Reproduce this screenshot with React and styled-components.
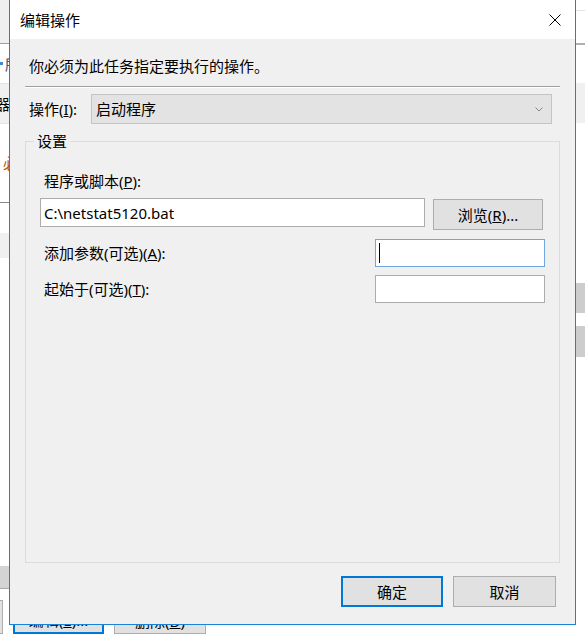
import React from 'react';
import styled, { createGlobalStyle } from 'styled-components';

const GlobalStyle = createGlobalStyle`
* {
    box-sizing: border-box;
    margin: 0;
    padding: 0;
}

body {
    width: 585px;
    height: 634px;
    overflow: hidden;
    background: #ffffff;
    font-family: "Noto Sans", "Noto Sans CJK SC", sans-serif;
    font-size: 15px;
    line-height: 20px;
    color: #000;
}
`;

const Desktop = styled.div`
	position: relative;
	width: 585px;
	height: 634px;
	overflow: hidden;
	background: #ffffff;
`;

/* ---------- the window behind the dialog ---------- */

const BackWindow = styled.div`
	display: flex;
	justify-content: space-between;
	width: 100%;
	height: 100%;
`;

const Pane = styled.div`
	display: flex;
	flex-direction: column;
	width: ${(p) => p.$w}px;
	height: 100%;
`;

const Band = styled.div`
	display: flex;
	align-items: center;
	flex: ${(p) => (p.$h ? `0 0 ${p.$h}px` : '1 1 auto')};
	background: ${(p) => p.$bg || '#ffffff'};
	border-bottom: ${(p) => (p.$line ? `${p.$lw || 1}px solid ${p.$line}` : 'none')};
	white-space: nowrap;
	overflow: hidden;
`;

const BandText = styled.span`
	margin-left: ${(p) => p.$indent || 0}px;
	color: ${(p) => p.$color || '#000'};
`;

const TaskIcon = styled.span`
	display: inline-block;
	width: 3px;
	height: 3px;
	background: #3a8ad8;
	margin-right: 2px;
`;

const ScrollBtn = styled.div`
	display: flex;
	align-items: center;
	flex: 0 0 ${(p) => p.$h}px;
	margin-top: ${(p) => p.$mt || 0}px;
	padding-left: 3px;
	background: #cdcdcd;
`;

const BackButtons = styled.div`
	display: flex;
	gap: 10px;
	padding-top: 11px;
	flex: 0 0 39px;
`;

const BackButton = styled.div`
	display: flex;
	justify-content: center;
	align-items: flex-end;
	width: ${(p) => p.$w}px;
	height: 34px;
	margin-left: ${(p) => p.$ml || 0}px;
	padding-bottom: 2px;
	background: #e1e1e1;
	border: ${(p) => (p.$primary ? '2px solid #0078d7' : '1px solid #adadad')};
`;

/* ---------- the dialog ---------- */

const Dialog = styled.div`
	position: absolute;
	left: 9px;
	top: -1px;
	width: 567px;
	height: 626px;
	display: flex;
	flex-direction: column;
	border: 1px solid #1883d7;
	background: #f0f0f0;
`;

const TitleBar = styled.div`
	display: flex;
	align-items: center;
	justify-content: space-between;
	flex: 0 0 39px;
	background: #ffffff;
	padding-left: 10px;
	padding-top: 1px;
`;

const Title = styled.span`
	font-size: 15px;
	color: #000;
`;

const CloseButton = styled.div`
	display: flex;
	align-items: center;
	justify-content: center;
	width: 40px;
	height: 38px;
`;

const Body = styled.div`
	flex: 1;
	display: flex;
	flex-direction: column;
	padding: 17px 15px 17px 15px;
`;

const Instruction = styled.p`
	padding-left: 4px;
`;

const Separator = styled.div`
	flex: none;
	height: 2px;
	margin-top: 10px;
	border-top: 1px solid #a0a0a0;
	border-bottom: 1px solid #ffffff;
`;

const ActionRow = styled.div`
	display: flex;
	align-items: center;
	margin-top: 6px;
`;

const ActionLabel = styled.span`
	flex: 0 0 66px;
	padding-left: 4px;
`;

const Combo = styled.div`
	display: flex;
	align-items: center;
	justify-content: space-between;
	width: 461px;
	height: 30px;
	padding: 0 8px 0 4px;
	background: #e3e3e3;
	border: 1px solid #c4c4c4;
`;

const GroupBox = styled.fieldset`
	flex: 1;
	margin-top: 7px;
	padding: 0 8px;
	border: 1px solid #dcdcdc;
	min-width: 0;
`;

const GroupTitle = styled.legend`
	padding: 0 3px;
	line-height: 20px;
`;

const GroupContent = styled.div`
	display: flex;
	flex-direction: column;
	padding: 20px 6px 0 6px;
`;

const FieldLabel = styled.label`
	display: block;
	padding-left: 4px;
	white-space: nowrap;
`;

const PathRow = styled.div`
	display: flex;
	align-items: flex-start;
	gap: 8px;
	margin-top: 7px;
`;

const OptionRow = styled.div`
	display: flex;
	align-items: center;
	justify-content: space-between;
	margin-top: ${(p) => p.$mt}px;
`;

const TextBox = styled.div`
	display: flex;
	align-items: center;
	width: ${(p) => p.$w}px;
	height: ${(p) => p.$h || 28}px;
	padding-left: 3px;
	background: #ffffff;
	border: 1px solid ${(p) => (p.$focused ? '#6fa6dc' : '#acacac')};
	white-space: nowrap;
	overflow: hidden;
`;

const Caret = styled.span`
	display: inline-block;
	width: 1px;
	height: 20px;
	background: #000;
`;

const Button = styled.div`
	display: flex;
	align-items: center;
	justify-content: center;
	width: ${(p) => p.$w}px;
	height: 31px;
	margin-top: ${(p) => p.$mt || 0}px;
	background: #e1e1e1;
	border: ${(p) => (p.$primary ? '2px solid #0078d7' : '1px solid #adadad')};
	color: #000;
`;

const Footer = styled.div`
	display: flex;
	justify-content: flex-end;
	gap: 10px;
	margin-top: 13px;
	padding-right: 4px;
`;

const U = styled.span`
	text-decoration: underline;
`;

function App() {
	return (
		<Desktop>
			<GlobalStyle />
			<BackWindow>
				<Pane $w={300}>
					<Band $h={44} $bg='#f0f0f0' $line='#a0a0a0' />
					<Band $h={40} $line='#e5e5e5'>
						<TaskIcon />
						<BandText $color='#36557d'>所</BandText>
					</Band>
					<Band $h={40} $bg='#f0f0f0' $line='#e5e5e5'>
						<BandText $indent={-5}>器</BandText>
					</Band>
					<Band $h={79} $line='#8a8a8a'>
						<BandText $indent={3} $color='#b35c00'>
							必
						</BandText>
					</Band>
					<Band $h={30} />
					<Band $h={25} $bg='#f0f0f0' />
					<Band />
					<Band $h={23} $bg='#d4d4d4' $line='#a9a9a9' />
					<BackButtons>
						<BackButton $w={83} $ml={-80} />
						<BackButton $w={91} $primary>
							编辑(<U>E</U>)...
						</BackButton>
						<BackButton $w={92}>
							删除(<U>D</U>)
						</BackButton>
					</BackButtons>
				</Pane>
				<Pane $w={120}>
					<Band $h={11} $line='#e3e3e3' />
					<Band $h={34} $line='#b0b0b0' $lw={2} />
					<Band $h={38} />
					<Band $h={40} $bg='#f0f0f0' />
					<Band $h={160} />
					<ScrollBtn $h={30}>
						<svg width='7' height='4' viewBox='0 0 7 4'>
							<path d='M0 4 L3.5 0 L7 4 Z' fill='#606060' />
						</svg>
					</ScrollBtn>
					<ScrollBtn $h={31} $mt={13}>
						<svg width='7' height='4' viewBox='0 0 7 4'>
							<path d='M0 0 L3.5 4 L7 0 Z' fill='#606060' />
						</svg>
					</ScrollBtn>
					<Band />
				</Pane>
			</BackWindow>

			<Dialog>
				<TitleBar>
					<Title>编辑操作</Title>
					<CloseButton>
						<svg width='12' height='12' viewBox='0 0 12 12'>
							<path d='M0.5 0.5 L11.5 11.5 M11.5 0.5 L0.5 11.5' stroke='#000' strokeWidth='1' />
						</svg>
					</CloseButton>
				</TitleBar>
				<Body>
					<Instruction>你必须为此任务指定要执行的操作。</Instruction>
					<Separator />
					<ActionRow>
						<ActionLabel>
							操作(<U>I</U>):
						</ActionLabel>
						<Combo>
							<span>启动程序</span>
							<svg width='8' height='5' viewBox='0 0 8 5'>
								<path d='M0.5 0.5 L4 4 L7.5 0.5' stroke='#888' strokeWidth='1' fill='none' />
							</svg>
						</Combo>
					</ActionRow>
					<GroupBox>
						<GroupTitle>设置</GroupTitle>
						<GroupContent>
							<FieldLabel>
								程序或脚本(<U>P</U>):
							</FieldLabel>
							<PathRow>
								<TextBox $w={385} $h={29}>
									C:\netstat5120.bat
								</TextBox>
								<Button $w={110} $mt={1}>
									浏览(<U>R</U>)...
								</Button>
							</PathRow>
							<OptionRow $mt={9}>
								<FieldLabel>
									添加参数(可选)(<U>A</U>):
								</FieldLabel>
								<TextBox $w={170} $focused>
									<Caret />
								</TextBox>
							</OptionRow>
							<OptionRow $mt={8}>
								<FieldLabel>
									起始于(可选)(<U>T</U>):
								</FieldLabel>
								<TextBox $w={170} />
							</OptionRow>
						</GroupContent>
					</GroupBox>
					<Footer>
						<Button $w={102} $primary>
							确定
						</Button>
						<Button $w={103}>取消</Button>
					</Footer>
				</Body>
			</Dialog>
		</Desktop>
	);
}

export default App;
